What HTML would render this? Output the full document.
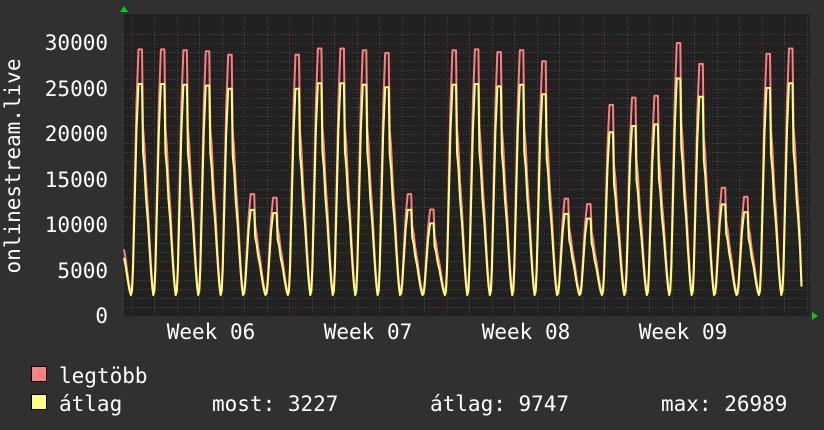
<!DOCTYPE html>
<html><head><meta charset="utf-8">
<style>
html,body{margin:0;padding:0;background:#303030;}
body{width:824px;height:430px;overflow:hidden;position:relative;}
svg{position:absolute;left:0;top:0;}
text{font-family:"DejaVu Sans Mono","Liberation Mono",monospace;fill:#fff;font-size:21px;}
</style></head><body>
<svg id="g" width="824" height="430" xmlns="http://www.w3.org/2000/svg">
<rect x="124" y="14" width="686" height="302" fill="#212121"/>
<g id="grid"></g>
<path id="red" fill="none" stroke="#ff7f7f" stroke-width="2" stroke-linejoin="round"/>
<path id="yel" fill="none" stroke="#ffff7f" stroke-width="2" stroke-linejoin="round"/>
<polygon points="120,12 124,6 128,12" fill="#00d000"/>
<polygon points="812,312 818,316 812,320" fill="#00d000"/>
<g text-anchor="end">
<text x="108" y="50">30000</text>
<text x="108" y="96">25000</text>
<text x="108" y="141">20000</text>
<text x="108" y="187">15000</text>
<text x="108" y="232">10000</text>
<text x="108" y="278">5000</text>
<text x="108" y="323">0</text>
</g>
<g text-anchor="middle">
<text x="211" y="339">Week 06</text>
<text x="368" y="339">Week 07</text>
<text x="526" y="339">Week 08</text>
<text x="683" y="339">Week 09</text>
</g>
<text transform="translate(20,166) rotate(-90)" text-anchor="middle">onlinestream.live</text>
<rect x="31.5" y="366.5" width="15" height="15" fill="#ff8080" stroke="#000"/>
<rect x="31.5" y="394.5" width="15" height="15" fill="#ffff80" stroke="#000"/>
<text x="59" y="383">legtöbb</text>
<text x="59" y="411">átlag</text>
<text x="212" y="411">most: 3227</text>
<text x="430" y="411">átlag: 9747</text>
<text x="661" y="411">max: 26989</text>
</svg>
<script>
(function(){
var NS="http://www.w3.org/2000/svg",g=document.getElementById('grid');
function ln(x1,y1,x2,y2,c){var l=document.createElementNS(NS,'line');l.setAttribute('x1',x1);l.setAttribute('y1',y1);l.setAttribute('x2',x2);l.setAttribute('y2',y2);l.setAttribute('stroke',c);l.setAttribute('stroke-width',1);l.setAttribute('stroke-dasharray','1,2');g.appendChild(l);}
function Y(v){return 316-v*273/30000;}
for(var v=1000;v<=31000;v+=1000){var y=Math.round(Y(v))+0.5;ln(124,y,810,y,v%5000==0?'#6a3434':'#4a4a4a');}
for(var x=131.5;x<810;x+=22.5){var w=Math.abs(((x-131.5)/157.5)-Math.round((x-131.5)/157.5))<0.01;ln(Math.round(x)+0.5,14,Math.round(x)+0.5,316,w?'#6a3434':'#4a4a4a');}
var reds=[29300,29300,29200,29100,28700,13400,13000,28700,29400,29400,29200,28900,13400,11700,29200,29300,29000,29200,28000,12900,12300,23200,24000,24200,30000,27700,14100,13100,28800,29400];
var kp=[[-9,0.02],[-8,.12],[-6.5,.4],[-4.5,.78],[-2.5,1],[1,1],[2,.68],[3.5,.6],[5,.46],[7,.34],[8.5,.22],[10,.11],[11.2,.04],[12.3,0],[13.4,0.01]];
var step=22.43,x0=141;
function build(scale,base){
 var pts=[];
 var peaks=[13500].concat(reds);
 for(var i=0;i<peaks.length;i++){
  var p=x0+(i-1)*step,pk=peaks[i]*scale;
  var last=(i==peaks.length-1);
  for(var k=0;k<kp.length;k++){
   var x=p+kp[k][0];
   if(k==kp.length-1)continue;
   var v=base+(pk-base)*kp[k][1];
   if(last&&kp[k][0]>=10){v=3227;pts.push([x,v]);break;}
   pts.push([x,v]);
  }
 }
 var out=[],first=true;
 for(var j=0;j<pts.length;j++){
  var x=pts[j][0];if(x<124){continue;}if(x>806)x=806;
  if(first&&j>0){var a=pts[j-1],c=pts[j],t=(124-a[0])/(c[0]-a[0]);out.push('M124,'+Y(a[1]+(c[1]-a[1])*t).toFixed(1));first=false;}
  out.push((first?'M':'L')+x.toFixed(1)+','+Y(pts[j][1]).toFixed(1));first=false;
 }
 return out.join(' ');
}
document.getElementById('red').setAttribute('d',build(1,2600));
document.getElementById('yel').setAttribute('d',build(0.87,2300));
})();
</script>
</body></html>
